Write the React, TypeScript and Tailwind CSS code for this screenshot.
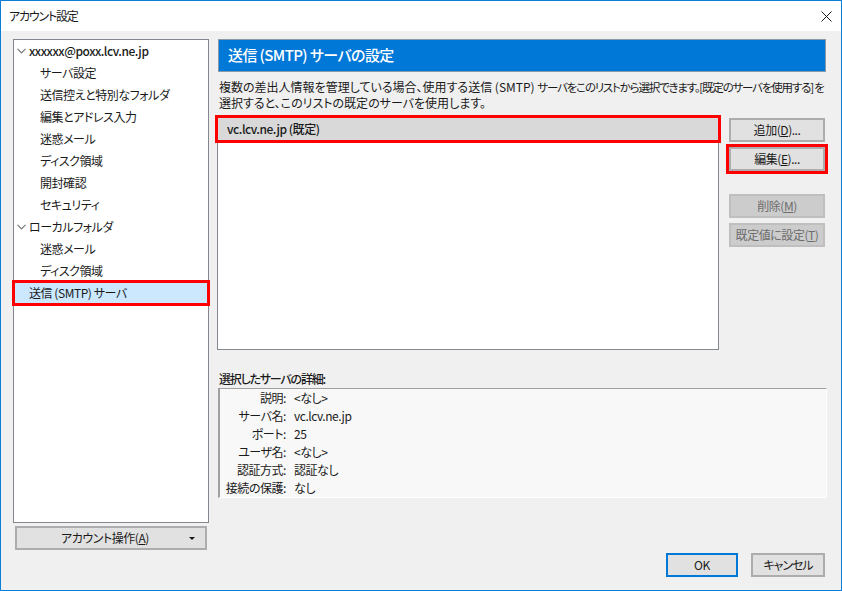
const treeRows = [
  { label: "xxxxxx@poxx.lcv.ne.jp", level: 0, open: true },
  { label: "サーバ設定", level: 1 },
  { label: "送信控えと特別なフォルダ", level: 1 },
  { label: "編集とアドレス入力", level: 1 },
  { label: "迷惑メール", level: 1 },
  { label: "ディスク領域", level: 1 },
  { label: "開封確認", level: 1 },
  { label: "セキュリティ", level: 1 },
  { label: "ローカルフォルダ", level: 0, open: true },
  { label: "迷惑メール", level: 1 },
  { label: "ディスク領域", level: 1 },
];

const details = [
  ["説明:", "<なし>"],
  ["サーバ名:", "vc.lcv.ne.jp"],
  ["ポート:", "25"],
  ["ユーザ名:", "<なし>"],
  ["認証方式:", "認証なし"],
  ["接続の保護:", "なし"],
];

const Chevron = () => (
  <svg width="9" height="6" viewBox="0 0 9 6" className="shrink-0">
    <path d="M0.5 0.8 L4.5 4.8 L8.5 0.8" fill="none" stroke="#7a7a7a" strokeWidth="1.2" />
  </svg>
);

const DialogButton = ({
  label,
  mnemonic,
  suffix = "",
  disabled = false,
  className = "",
}: {
  label: string;
  mnemonic: string;
  suffix?: string;
  disabled?: boolean;
  className?: string;
}) => (
  <button
    className={`h-[24px] w-[96px] border-2 text-[12px] leading-none flex items-center justify-center ${
      disabled
        ? "bg-[#cccccc] border-[#bfbfbf] text-[#6d6d6d]"
        : "bg-[#e1e1e1] border-[#adadad] text-[#1a1a1a]"
    } ${className}`}
  >
    {label}(<span className="underline">{mnemonic}</span>){suffix}
  </button>
);

export default function App() {
  return (
    <div
      className="w-[842px] h-[591px] border border-[#0a7fd8] bg-[#f0f0f0] flex flex-col overflow-hidden text-[12px] tracking-[-0.45px] text-[#1a1a1a] [font-feature-settings:'palt']"
      style={{ fontFamily: '"Noto Sans CJK JP", "Noto Sans", sans-serif' }}
    >
      <div className="h-[30px] bg-white shrink-0 flex items-center justify-between pl-[8px] pr-[9px]">
        <span className="tracking-[-1.2px]">アカウント設定</span>
        <svg width="11" height="11" viewBox="0 0 11 11">
          <path d="M0.5 0.5 L10.5 10.5 M10.5 0.5 L0.5 10.5" stroke="#1a1a1a" strokeWidth="1" />
        </svg>
      </div>

      <div className="flex flex-1 pl-[12px] pr-[15px] pt-[8px] pb-[13px] min-h-0">
        <div className="w-[196px] shrink-0 flex flex-col">
          <div className="h-[484px] bg-white border border-[#828790] shrink-0">
            {treeRows.map((row, i) => (
              <div
                key={i}
                className={`h-[22px] flex items-center ${row.level === 0 ? "pl-[3px] gap-[3px]" : "pl-[26px]"}`}
              >
                {row.open && <Chevron />}
                <span className={i === 0 ? "font-medium" : ""}>{row.label}</span>
              </div>
            ))}
            <div className="h-[22px] flex items-center pl-[15px] bg-[#cce8ff] outline-[3px] outline-[#ff0000] -outline-offset-1">
              送信 (SMTP) サーバ
            </div>
          </div>
          <button className="mt-[3px] mx-[2px] h-[24px] bg-[#e1e1e1] border-2 border-[#adadad] relative flex items-center justify-center pr-[12px]">
            アカウント操作(<span className="underline">A</span>)
            <span className="absolute right-[10px] top-[9px] w-0 h-0 border-x-[3px] border-x-transparent border-t-[3px] border-t-[#1a1a1a]" />
          </button>
        </div>

        <div className="flex-1 ml-[9px] flex flex-col min-w-0">
          <div className="h-[33px] shrink-0 bg-[#0078d7] border border-[#8a9aa8] text-white text-[15px] tracking-[-0.6px] font-medium flex items-center pl-[9px]">
            送信 (SMTP) サーバの設定
          </div>
          <p className="mt-[7px] ml-[1px] h-[30px] text-[12px] tracking-normal leading-[15px] whitespace-nowrap">
            複数の差出人情報を管理している場合、使用する送信 (SMTP){" "}
            <span className="text-[11.5px] tracking-[-1.2px]">
              サーバをこのリストから選択できます。[既定のサーバを使用する] を
            </span>
            <br />
            選択すると、このリストの既定のサーバを使用します。
          </p>

          <div className="mt-[8px] flex shrink-0">
            <div className="-ml-[1px] w-[502px] h-[233px] bg-white border border-[#828790]">
              <div className="h-[22px] bg-[#d9d9d9] pl-[9px] flex items-center font-medium outline-[3px] outline-[#ff0000] outline-offset-0">
                vc.lcv.ne.jp (既定)
              </div>
            </div>
            <div className="ml-[10px] mt-[1px] flex flex-col">
              <DialogButton label="追加" mnemonic="D" suffix="..." />
              <DialogButton
                label="編集"
                mnemonic="E"
                suffix="..."
                className="mt-[5px] outline-[3px] outline-[#ff0000] outline-offset-0"
              />
              <DialogButton label="削除" mnemonic="M" disabled className="mt-[23px]" />
              <DialogButton label="既定値に設定" mnemonic="T" disabled className="mt-[5px]" />
            </div>
          </div>

          <div className="mt-[21px] ml-[1px] h-[16px] leading-[16px] font-medium tracking-[-1.2px]">選択したサーバの詳細:</div>
          <div className="mt-[1px] h-[110px] w-[609px] bg-[#f8f8f8] border-t border-l-2 border-[#a0a0a0] border-r border-b border-r-white border-b-white grid grid-cols-[66px_1fr] auto-rows-[18px] gap-x-[8px] items-center">
            {details.map(([k, v]) => (
              <div key={k} className="contents">
                <span className="text-right whitespace-nowrap">{k}</span>
                <span>{v}</span>
              </div>
            ))}
          </div>

          <div className="mt-auto mr-[1px] flex justify-end">
            <button className="h-[24px] w-[72px] bg-[#e1e1e1] border-2 border-[#0078d7]">OK</button>
            <button className="h-[24px] w-[74px] ml-[13px] bg-[#e1e1e1] border-2 border-[#adadad] tracking-[-1px]">キャンセル</button>
          </div>
        </div>
      </div>
    </div>
  );
}
